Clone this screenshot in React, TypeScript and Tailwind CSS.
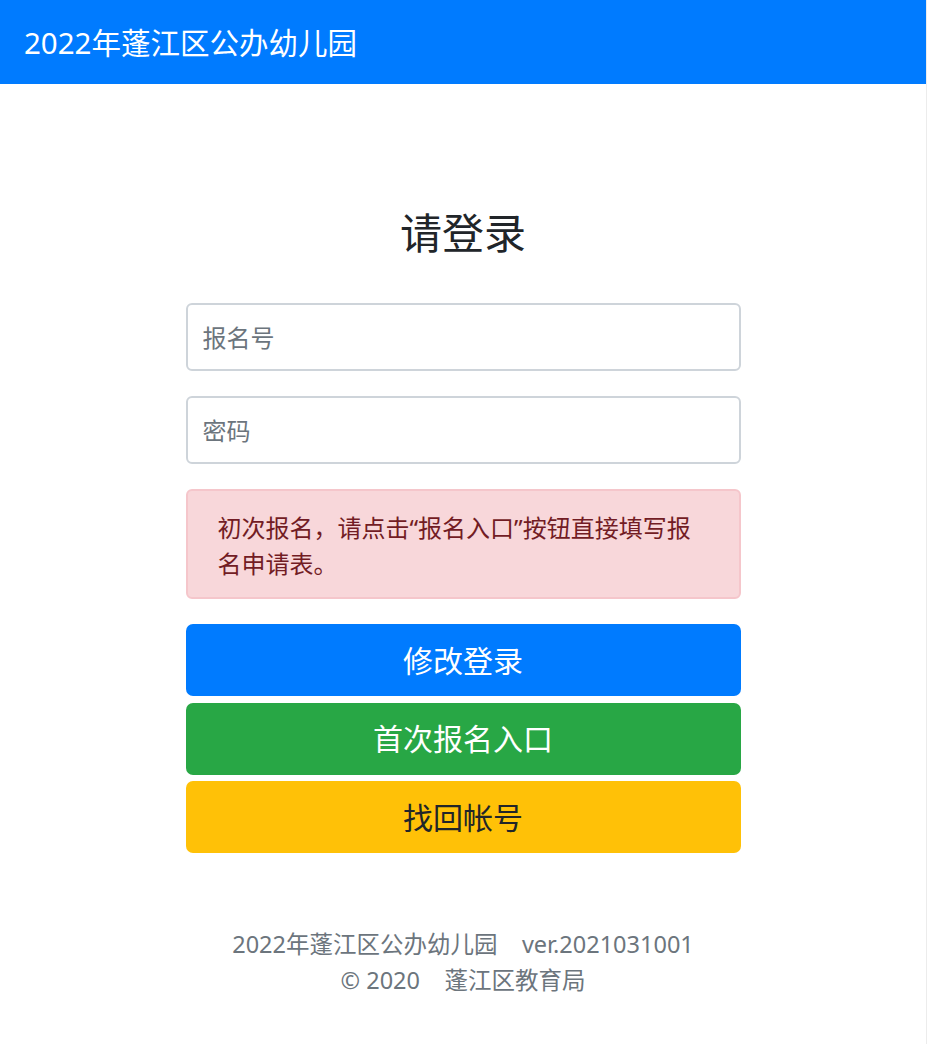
import React from "react";

const font = { fontFamily: '"Noto Sans", "Noto Sans CJK SC", sans-serif' };

export default function App() {
  return (
    <div
      className="min-h-[1044px] w-[927px] bg-white text-[#212529] border-r border-[#ececec]"
      style={font}
    >
      <header className="h-[84px] bg-[#007bff] flex items-center px-[24px]">
        <span className="text-[29.5px] leading-[45px] text-white">2022年蓬江区公办幼儿园</span>
      </header>

      <main className="flex flex-col items-center pt-[124px]">
        <div className="w-[555px] flex flex-col">
          <h3 className="text-[42px] leading-[50px] font-normal text-center mb-[45px]">请登录</h3>

          <input
            type="text"
            placeholder="报名号"
            className="h-[68px] w-full border-2 border-[#ced4da] rounded-[6px] px-[15px] text-[24px] text-[#495057] placeholder:text-[#6c757d] outline-none"
          />
          <input
            type="password"
            placeholder="密码"
            className="mt-[25px] h-[68px] w-full border-2 border-[#ced4da] rounded-[6px] px-[15px] text-[24px] text-[#495057] placeholder:text-[#6c757d] outline-none"
          />

          <div className="mt-[25px] h-[110px] bg-[#f8d7da] border-2 border-[#f5c6cb] rounded-[6px] pl-[30px] pt-[19px] text-[#721c24] text-[24px] leading-[36px]">
            <div className="w-[480px]">初次报名，请点击“报名入口”按钮直接填写报名申请表。</div>
          </div>

          <div className="mt-[25px] flex flex-col gap-[6.5px]">
            <button className="h-[72px] w-full rounded-[7px] bg-[#007bff] text-white text-[30px]">修改登录</button>
            <button className="h-[72px] w-full rounded-[7px] bg-[#28a745] text-white text-[30px]">首次报名入口</button>
            <button className="h-[72px] w-full rounded-[7px] bg-[#ffc107] text-[#212529] text-[30px]">找回帐号</button>
          </div>
        </div>

        <footer className="mt-[73px] text-center text-[#6c757d] text-[23.5px] leading-[36px]">
          <div>2022年蓬江区公办幼儿园&nbsp;&nbsp;&nbsp;&nbsp;ver.2021031001</div>
          <div>©&nbsp;2020&nbsp;&nbsp;&nbsp;&nbsp;蓬江区教育局</div>
        </footer>
      </main>
    </div>
  );
}
